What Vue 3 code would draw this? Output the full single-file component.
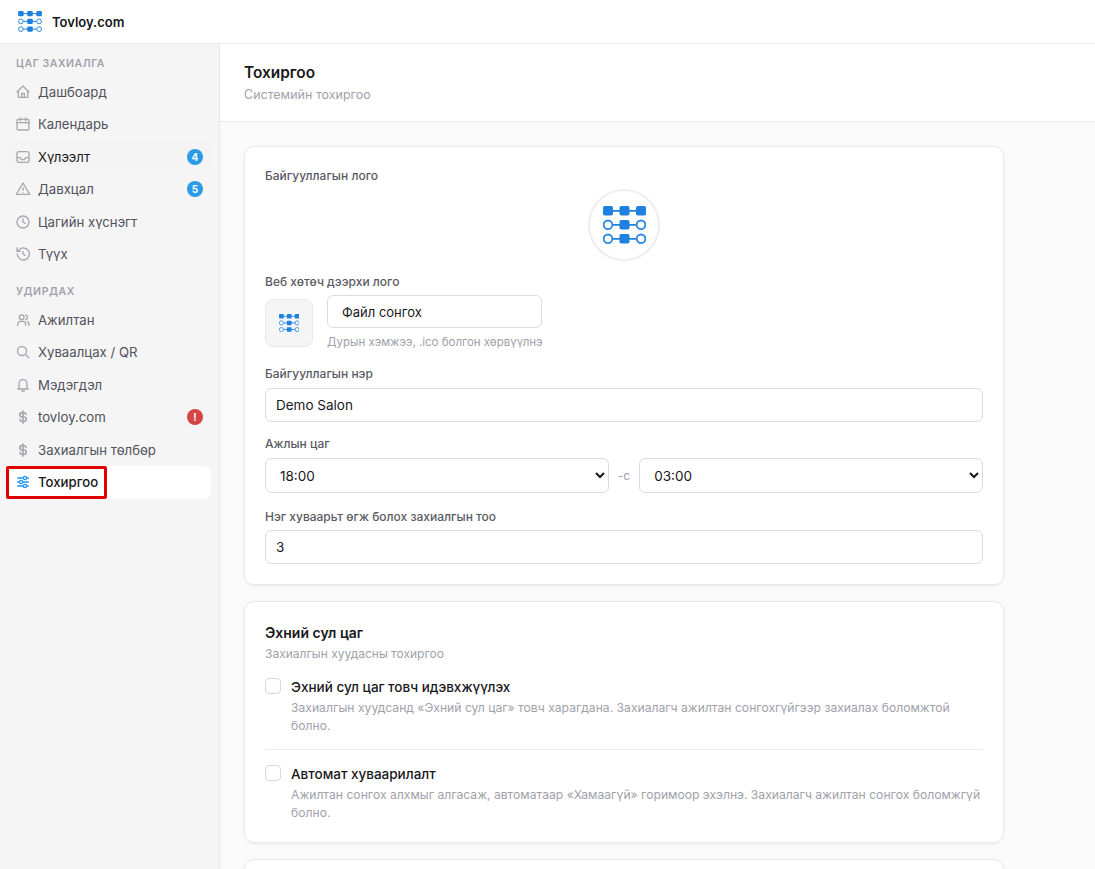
<script setup>
const logoRows = [
  ['s', 's', 's'],
  ['c', 's', 'c'],
  ['c', 's', 'c']
]
const groups = [
  {
    label: 'ЦАГ ЗАХИАЛГА',
    items: [
      { text: 'Дашбоард', icon: 'home' },
      { text: 'Календарь', icon: 'cal' },
      { text: 'Хүлээлт', icon: 'inbox', badge: '4', hover: true },
      { text: 'Давхцал', icon: 'warn', badge: '5' },
      { text: 'Цагийн хүснэгт', icon: 'clock' },
      { text: 'Түүх', icon: 'history' }
    ]
  },
  {
    label: 'УДИРДАХ',
    items: [
      { text: 'Ажилтан', icon: 'users' },
      { text: 'Хуваалцах / QR', icon: 'search' },
      { text: 'Мэдэгдэл', icon: 'bell' },
      { text: 'tovloy.com', icon: 'dollar', badge: '!', red: true },
      { text: 'Захиалгын төлбөр', icon: 'dollar' },
      { text: 'Тохиргоо', icon: 'sliders', active: true }
    ]
  }
]
</script>

<template>
  <div class="app">
    <svg class="defs" width="0" height="0">
      <symbol id="logo" viewBox="0 0 43 38">
        <g v-for="(row, r) in logoRows" :key="r">
          <line x1="5" x2="38" :y1="4.8 + r * 14" :y2="4.8 + r * 14" class="ln" />
          <template v-for="(c, i) in row" :key="i">
            <rect v-if="c === 's'" :x="i * 16.5" :y="r * 14" width="10" height="9.6" rx="1.8" class="fill" />
            <circle v-else :cx="i * 16.5 + 5" :cy="4.8 + r * 14" r="4.3" class="ring" />
          </template>
        </g>
      </symbol>
    </svg>
    <header class="top">
      <svg class="brand-logo" width="24" height="21"><use href="#logo" /></svg>
      <span class="brand">Tovloy.com</span>
    </header>
    <div class="body">
      <aside class="side">
        <template v-for="g in groups" :key="g.label">
          <div class="section">{{ g.label }}</div>
          <a v-for="it in g.items" :key="it.text" class="item" :class="{ active: it.active, hover: it.hover }">
            <svg class="ico" viewBox="0 0 24 24" fill="none" stroke="currentColor" stroke-width="2" stroke-linecap="round" stroke-linejoin="round">
              <template v-if="it.icon === 'home'"><path d="M3 12l9-9 9 9" /><path d="M5 10v10h14V10" /><path d="M10 20v-6h4v6" /></template>
              <template v-else-if="it.icon === 'cal'"><rect x="3" y="5" width="18" height="16" rx="2" /><path d="M16 3v4M8 3v4M3 10h18" /></template>
              <template v-else-if="it.icon === 'inbox'"><rect x="3" y="4" width="18" height="16" rx="3" /><path d="M3 13h5l2 3h4l2-3h5" /></template>
              <template v-else-if="it.icon === 'warn'"><path d="M12 3L2 20h20L12 3z" /><path d="M12 10v4M12 17v.01" /></template>
              <template v-else-if="it.icon === 'clock'"><circle cx="12" cy="12" r="9" /><path d="M12 7v5l3 2" /></template>
              <template v-else-if="it.icon === 'history'"><path d="M3.5 12a9 9 0 1 0 2.6-6.4L3 8" /><path d="M3 3v5h5" /><path d="M12 8v4l3 2" /></template>
              <template v-else-if="it.icon === 'users'"><circle cx="10" cy="8" r="3.6" /><path d="M4 20v-1.5a4.5 4.5 0 0 1 4.5-4.5h3a4.5 4.5 0 0 1 4.5 4.5V20" /><path d="M16 4.5a3.6 3.6 0 0 1 0 7M18.5 14.5a4.5 4.5 0 0 1 2.5 4V20" /></template>
              <template v-else-if="it.icon === 'search'"><circle cx="10.5" cy="10.5" r="6.8" /><path d="M20.5 20.5l-5-5" /></template>
              <template v-else-if="it.icon === 'bell'"><path d="M6 17V10a6 6 0 0 1 12 0v7l2 1H4l2-1z" /><path d="M10 21h4" /></template>
              <template v-else-if="it.icon === 'dollar'"><path stroke-width="2.6" d="M16.5 8A3.5 3.5 0 0 0 13 5.5h-2.5a3.25 3.25 0 0 0 0 6.5h3a3.25 3.25 0 0 1 0 6.5H11A3.5 3.5 0 0 1 7.5 16" /><path stroke-width="2.6" d="M12 3v18" /></template>
              <template v-else><path d="M4 6h16M4 12h16M4 18h16" /><circle cx="15" cy="6" r="2.4" fill="#fff" /><circle cx="9" cy="12" r="2.4" fill="#fff" /><circle cx="15" cy="18" r="2.4" fill="#fff" /></template>
            </svg>
            <span class="item-text">{{ it.text }}</span>
            <span v-if="it.badge" class="badge" :class="{ red: it.red }">{{ it.badge }}</span>
            <span v-if="it.active" class="mark"></span>
          </a>
        </template>
      </aside>
      <main class="main">
        <div class="head">
          <h1>Тохиргоо</h1>
          <p>Системийн тохиргоо</p>
        </div>
        <div class="content">
          <section class="card">
            <label class="lbl first">Байгууллагын лого</label>
            <div class="logo-wrap">
              <div class="logo-circle">
                <svg width="43" height="38"><use href="#logo" /></svg>
              </div>
            </div>
            <label class="lbl">Веб хөтөч дээрхи лого</label>
            <div class="fav-row">
              <div class="fav">
                <svg width="20.5" height="18"><use href="#logo" /></svg>
              </div>
              <div>
                <button class="file">Файл сонгох</button>
                <div class="hint">Дурын хэмжээ, .ico болгон хөрвүүлнэ</div>
              </div>
            </div>
            <label class="lbl">Байгууллагын нэр</label>
            <input class="field" value="Demo Salon" />
            <label class="lbl hours">Ажлын цаг</label>
            <div class="time-row">
              <select class="field"><option>18:00</option></select>
              <span class="dash">-с</span>
              <select class="field"><option>03:00</option></select>
            </div>
            <label class="lbl count">Нэг хуваарьт өгж болох захиалгын тоо</label>
            <input class="field" value="3" />
          </section>
          <section class="card second">
            <h2>Эхний сул цаг</h2>
            <p class="sub">Захиалгын хуудасны тохиргоо</p>
            <div class="check">
              <span class="box"></span>
              <div>
                <div class="check-title">Эхний сул цаг товч идэвхжүүлэх</div>
                <div class="check-desc">Захиалгын хуудсанд «Эхний сул цаг» товч харагдана. Захиалагч ажилтан сонгохгүйгээр захиалах боломжтой болно.</div>
              </div>
            </div>
            <div class="sep"></div>
            <div class="check">
              <span class="box"></span>
              <div>
                <div class="check-title">Автомат хуваарилалт</div>
                <div class="check-desc">Ажилтан сонгох алхмыг алгасаж, автоматаар «Хамаагүй» горимоор эхэлнэ. Захиалагч ажилтан сонгох боломжгүй болно.</div>
              </div>
            </div>
          </section>
          <section class="card third"></section>
        </div>
      </main>
    </div>
  </div>
</template>

<style>
html, body { margin: 0; height: 100%; overflow: hidden; background: #fff; }
</style>

<style scoped>
.app { height: 869px; overflow: hidden; display: flex; flex-direction: column; font-family: Inter, "Noto Sans", sans-serif; color: #18181b; }
.defs { position: absolute; }
.top { height: 44px; box-sizing: border-box; flex: none; display: flex; align-items: center; gap: 10px; padding-left: 18px; border-bottom: 1px solid #e9e9eb; background: #fff; }
.brand { font-size: 13px; font-weight: 600; color: #18181b; }
.ln { stroke: #1f80e0; stroke-width: 1.8; }
.fill { fill: #1f80e0; }
.ring { fill: #fff; stroke: #2a88e2; stroke-width: 1.8; }
.body { flex: 1; display: flex; min-height: 0; }
.side { width: 220px; flex: none; box-sizing: border-box; background: #f5f5f6; border-right: 1px solid #e9e9eb; padding: 12px 8px 0; }
.section { font-size: 10.5px; font-weight: 600; letter-spacing: .55px; color: #a1a1aa; height: 16px; line-height: 16px; padding: 0 8px; margin-bottom: 3.6px; }
.item + .section { margin-top: 13.4px; }
.item { height: 32.5px; position: relative; display: flex; align-items: center; padding: 0 8px 0 7px; box-sizing: border-box; font-size: 13.2px; color: #52525b; border-radius: 8px; }
.item.hover { color: #18181b; background: #f4f4f5; }
.item.active { color: #18181b; background: #fff; font-weight: 500; }
.ico { width: 16px; height: 16px; color: #a8a8af; margin-right: 7px; flex: none; }
.active .ico { color: #2196f3; }
.item-text { flex: 1; }
.badge { width: 16px; height: 16px; border-radius: 50%; background: #2b9be8; color: #fff; font-size: 10px; font-weight: 700; display: flex; align-items: center; justify-content: center; }
.badge.red { background: #d64545; }
.mark { position: absolute; left: -2px; top: 0; width: 101px; height: 32.5px; box-sizing: border-box; border: 3px solid #e00000; border-radius: 2px; }
.main { flex: 1; min-width: 0; background: #fafafa; overflow: hidden; }
.head { height: 78px; box-sizing: border-box; background: #fff; border-bottom: 1px solid #e9e9eb; padding: 20px 24px 0; }
.head h1 { margin: 0; font-size: 15.4px; line-height: 18px; font-weight: 600; color: #18181b; }
.head p { margin: 5px 0 0; font-size: 12.5px; line-height: 16px; color: #a1a1aa; }
.content { padding: 24px 91px 0 24px; display: flex; flex-direction: column; gap: 16px; }
.card { background: #fff; border: 1px solid #e9e9eb; border-radius: 10px; padding: 20px; box-shadow: 0 1px 3px rgba(0,0,0,.06); }
.lbl { display: block; font-size: 12px; line-height: 16px; font-weight: 500; color: #5a5a63; margin: 12px 0 6px; }
.lbl.first { margin: 1px 0 5px; }
.lbl.hours { margin-top: 14px; }
.lbl.count { margin-bottom: 5px; }
.logo-wrap { display: flex; justify-content: center; margin: 0 0 13px; }
.logo-circle { width: 72px; height: 72px; box-sizing: border-box; border-radius: 50%; border: 2px solid #eeeeef; display: flex; align-items: center; justify-content: center; }
.fav-row { display: flex; gap: 14px; margin-top: -1px; padding-bottom: 4px; }
.fav { width: 48px; height: 48px; box-sizing: border-box; border: 1px solid #e9e9eb; background: #f5f5f6; border-radius: 8px; display: flex; align-items: center; justify-content: center; margin-top: 4px; }
.file { width: 215px; height: 33px; box-sizing: border-box; border: 1px solid #dcdce0; border-radius: 6px; background: #fff; text-align: left; padding: 0 14px; font: 400 13px Inter, "Noto Sans", sans-serif; color: #18181b; display: block; }
.hint { font-size: 11.5px; line-height: 16px; color: #a1a1aa; margin-top: 6px; }
.field { display: block; width: 100%; box-sizing: border-box; height: 34px; border: 1px solid #dcdce0; border-radius: 6px; background: #fff; padding: 0 10px; font: 400 13.5px Inter, "Noto Sans", sans-serif; color: #18181b; outline: none; }
select.field { height: 35px; padding-top: 1px; }
.time-row { display: flex; align-items: center; gap: 9px; padding-bottom: 4px; }
.time-row .field { flex: 1; min-width: 0; }
.dash { font-size: 12px; color: #a1a1aa; }
.second { padding-top: 22px; padding-bottom: 20px; }
.second h2 { margin: 0; font-size: 14px; line-height: 18px; font-weight: 600; }
.sub { margin: 4px 0 0; font-size: 12px; line-height: 16px; color: #a1a1aa; }
.check { display: flex; gap: 10px; margin-top: 15px; }
.sub + .check { margin-top: 16px; }
.box { width: 16px; height: 16px; box-sizing: border-box; border: 1px solid #d8d8dc; border-radius: 4px; flex: none; background: #fff; }
.check-title { font-size: 13.5px; line-height: 18px; font-weight: 500; }
.check-desc { font-size: 12.15px; line-height: 18px; color: #a1a1aa; margin-top: 3px; }
.sep { height: 1px; background: #ececee; margin-top: 14px; }
.third { height: 60px; }
</style>
